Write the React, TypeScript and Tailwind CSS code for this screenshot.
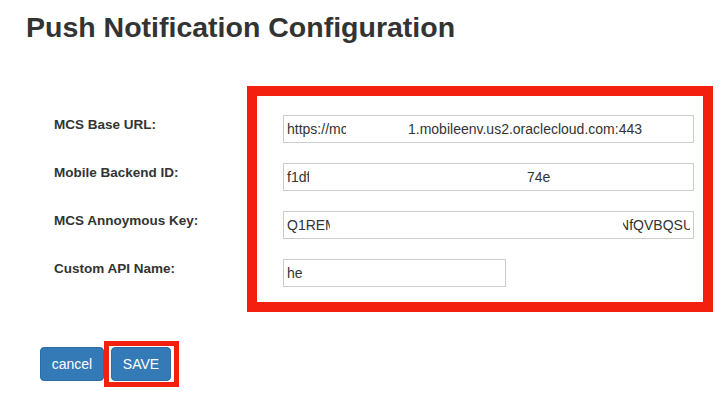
import React from 'react';

const labels = ['MCS Base URL:', 'Mobile Backend ID:', 'MCS Annoymous Key:', 'Custom API Name:'];

export default function App() {
  return (
    <div className="w-[722px] h-[401px] bg-white font-['Liberation_Sans',Arial,sans-serif] text-[#333] overflow-hidden">
      {/* Title */}
      <h2 className="pl-[26px] pt-[11px] text-[28.5px] leading-[32px] font-bold text-[#333]">
        Push Notification Configuration
      </h2>

      {/* Form */}
      <div className="flex mt-[43px] pl-[54px]">
        <div className="w-[193px] flex flex-col gap-[20px] pt-[29px]">
          {labels.map((label) => (
            <div key={label} className="h-[28px] pt-[2px] text-[13.5px] leading-[16px] font-bold">
              {label}
            </div>
          ))}
        </div>

        {/* Highlighted inputs */}
        <div className="w-[466px] h-[226px] border-[10px] border-[#f4200f] pl-[26px] pr-[9px] pt-[19px] flex flex-col gap-[20px]">
          <div className="w-[411px] h-[28px] border border-[#ccc] flex items-center px-[3px] text-[14px] text-[#333] whitespace-nowrap overflow-hidden">
            <span className="w-[59px] overflow-hidden">https://mcs</span>
            <span className="ml-[62px]">1.mobileenv.us2.oraclecloud.com:443</span>
          </div>
          <div className="w-[411px] h-[28px] border border-[#ccc] flex items-center px-[3px] text-[14px] text-[#333] whitespace-nowrap overflow-hidden">
            <span className="w-[22px] overflow-hidden">f1dfb</span>
            <span className="ml-[218px]">74e</span>
          </div>
          <div className="w-[411px] h-[28px] border border-[#ccc] flex items-center px-[3px] text-[14px] text-[#333] whitespace-nowrap overflow-hidden">
            <span className="w-[43px] overflow-hidden">Q1REMW</span>
            <span className="ml-auto w-[67px] flex justify-end overflow-hidden">
              <span className="mr-[-3px] shrink-0">NfQVBQSU</span>
            </span>
          </div>
          <div className="w-[223px] h-[28px] border border-[#ccc] flex items-center px-[3px] text-[14px] text-[#333] whitespace-nowrap overflow-hidden">
            <span>he</span>
          </div>
        </div>
      </div>

      {/* Actions */}
      <div className="flex items-center mt-[29px] pl-[40px]">
        <button className="w-[64px] h-[34px] bg-[#337ab7] border border-[#2e6da4] rounded-[4px] text-white text-[14px] leading-[20px]">
          cancel
        </button>
        <div className="border-[5px] border-[#f4200f] pl-[2px] pr-[3px] py-[1px]">
          <button className="w-[60px] h-[34px] bg-[#337ab7] border border-[#2e6da4] rounded-[4px] text-white text-[14px] leading-[20px]">
            SAVE
          </button>
        </div>
      </div>
    </div>
  );
}
